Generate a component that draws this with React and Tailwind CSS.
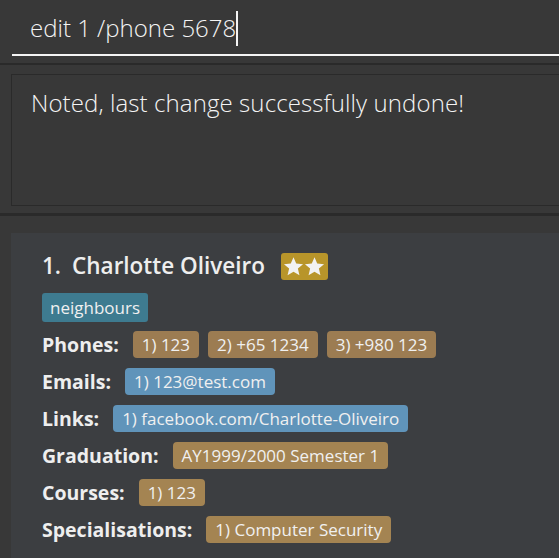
const FONT = { fontFamily: '"Open Sans", "Noto Sans", sans-serif' };

const Star = () => (
  <svg width="21" height="21" viewBox="0 0 24 24" fill="#f2f2f2">
    <path d="M12 1.5l3.1 7.2 7.8.6-5.9 5.1 1.8 7.6L12 18l-6.8 4 1.8-7.6-5.9-5.1 7.8-.6z" />
  </svg>
);

const Pill = ({ children, color }) => (
  <span className={`inline-flex items-center h-[27px] px-[9px] rounded-[4px] text-[17px] text-[#f0f0f0] ${color}`}>
    {children}
  </span>
);

const rows = [
  { label: 'Phones:', color: 'bg-[#9c7c52]', items: ['1) 123', '2) +65 1234', '3) +980 123'] },
  { label: 'Emails:', color: 'bg-[#6094ba]', items: ['1) 123@test.com'] },
  { label: 'Links:', color: 'bg-[#6094ba]', items: ['1) facebook.com/Charlotte-Oliveiro'] },
  { label: 'Graduation:', color: 'bg-[#a48452]', items: ['AY1999/2000 Semester 1'] },
  { label: 'Courses:', color: 'bg-[#a48452]', items: ['1) 123'] },
  { label: 'Specialisations:', color: 'bg-[#a48452]', items: ['1) Computer Security'] },
];

export default function App() {
  return (
    <div className="h-[558px] w-[559px] overflow-hidden bg-[#383838] flex flex-col" style={FONT}>
      {/* command box */}
      <div className="pl-[12px]">
        <div className="h-[56px] border-b-2 border-[#f4f4f4] pl-[18px] pt-[11px]">
          <div className="h-[34px] flex items-center">
            <span className="text-[24px] leading-[34px] font-light text-[#f4f4f4]">edit 1 /phone 5678</span>
            <span className="w-[2px] h-[35px] bg-[#f4f4f4]" />
          </div>
        </div>
      </div>
      <div className="h-[7px]" />
      <div className="h-[2px] bg-[#2a2a2a]" />
      <div className="h-[9px]" />

      {/* result box */}
      <div className="ml-[11px] -mr-[2px] h-[132px] border border-[#2a2a2a] pl-[19px] pt-[12px]">
        <p className="text-[24px] leading-[32px] font-light text-[#f4f4f4] tracking-[0.1px]">Noted, last change successfully undone!</p>
      </div>
      <div className="h-[7px]" />
      <div className="h-[3px] bg-[#2a2a2a]" />
      <div className="h-[17px]" />

      {/* person card */}
      <div className="ml-[11px] flex-1 bg-[#3c3e41] pl-[31px] pt-[19px] text-[#eeeeee]">
        <div className="flex items-center h-[28px]">
          <span className="text-[22.5px] font-semibold">1.</span>
          <span className="text-[22.5px] font-semibold ml-[11px]">Charlotte Oliveiro</span>
          <span className="ml-[16px] h-[27px] w-[47px] rounded-[3px] bg-[#b8952a] flex items-center justify-center">
            <Star />
            <Star />
          </span>
        </div>
        <div className="mt-[13px] flex">
          <span className="inline-flex items-center h-[29px] px-[8px] rounded-[3px] bg-[#3e7b90] text-[17px] text-[#f0f0f0]">
            neighbours
          </span>
        </div>
        <div className="mt-[9px] flex flex-col gap-[10px]">
          {rows.map((r) => (
            <div key={r.label} className="flex items-center h-[27px]">
              <span className="text-[19.5px] font-bold mr-[14px]">{r.label}</span>
              <div className="flex gap-[9px]">
                {r.items.map((it) => (
                  <Pill key={it} color={r.color}>{it}</Pill>
                ))}
              </div>
            </div>
          ))}
        </div>
      </div>
    </div>
  );
}
